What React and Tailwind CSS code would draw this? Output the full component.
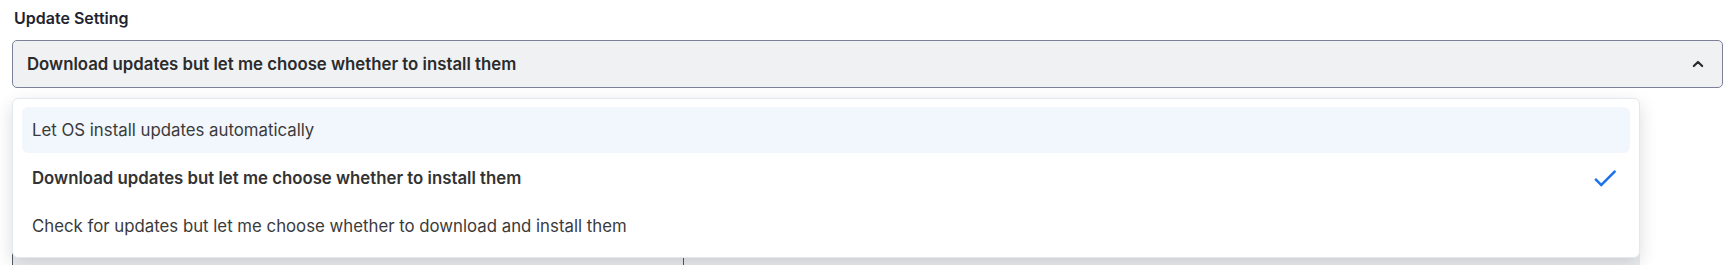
import React, { useState } from "react";

const options = [
  "Let OS install updates automatically",
  "Download updates but let me choose whether to install them",
  "Check for updates but let me choose whether to download and install them",
];

const ChevronUp = () => (
  <svg width="20" height="20" viewBox="0 0 24 24" fill="none" stroke="#2b2b2b" strokeWidth="2.6" strokeLinecap="round" strokeLinejoin="round">
    <path d="M7 14.5l5-5 5 5" />
  </svg>
);

const CheckIcon = () => (
  <svg width="30" height="30" viewBox="0 0 24 24" fill="#1a73e8">
    <path d="M9 16.17L4.83 12l-1.42 1.41L9 19 21 7l-1.41-1.41z" />
  </svg>
);

const App = () => {
  const [selected, setSelected] = useState(options[1]);
  const [hovered, setHovered] = useState(options[0]);

  return (
    <div className="min-h-screen bg-white pl-3 pr-[6px] pt-[6px] font-['Inter',sans-serif] overflow-hidden">
      {/* Label */}
      <div className="pl-[2px] text-base leading-6 font-semibold text-[#1f2330]">Update Setting</div>

      {/* Select + menu */}
      <div className="relative mt-[10px]">
        <button className="flex h-12 w-full items-center justify-between rounded-[5px] border border-[#7c8099] bg-[#f0f1f3] pl-[14px] pr-[14px] text-left">
          <span className="text-[16.8px] leading-6 font-semibold text-[#2b2b2b]">{selected}</span>
          <ChevronUp />
        </button>

        <div className="absolute left-0 top-full z-10 mt-[10px] w-[1628px] rounded-md border border-[#e3e8ef] bg-white px-[9px] py-2 shadow-[0_6px_18px_rgba(0,0,0,0.14)]">
          <ul className="flex flex-col gap-[2px]">
            {options.map((item) => (
              <li
                key={item}
                onMouseEnter={() => setHovered(item)}
                onClick={() => setSelected(item)}
                className={`flex h-[46px] cursor-pointer items-center justify-between rounded-md pl-[10px] pr-[10px] text-[16.8px] leading-6 ${
                  hovered === item ? "bg-[#f2f6fd]" : "bg-white"
                } ${selected === item ? "font-semibold text-[#333333]" : "text-[#3a3a3a]"}`}
              >
                <span>{item}</span>
                {selected === item && <CheckIcon />}
              </li>
            ))}
          </ul>
        </div>
      </div>

      {/* Fields below, mostly covered by the menu */}
      <div className="mt-[110px] flex">
        <div className="h-[120px] w-[671px] border-l border-[#555a66] bg-[#eceef1]" />
        <div className="h-[120px] w-[957px] border-l border-[#555a66] bg-[#eceef1]" />
      </div>
    </div>
  );
};

export default App;
